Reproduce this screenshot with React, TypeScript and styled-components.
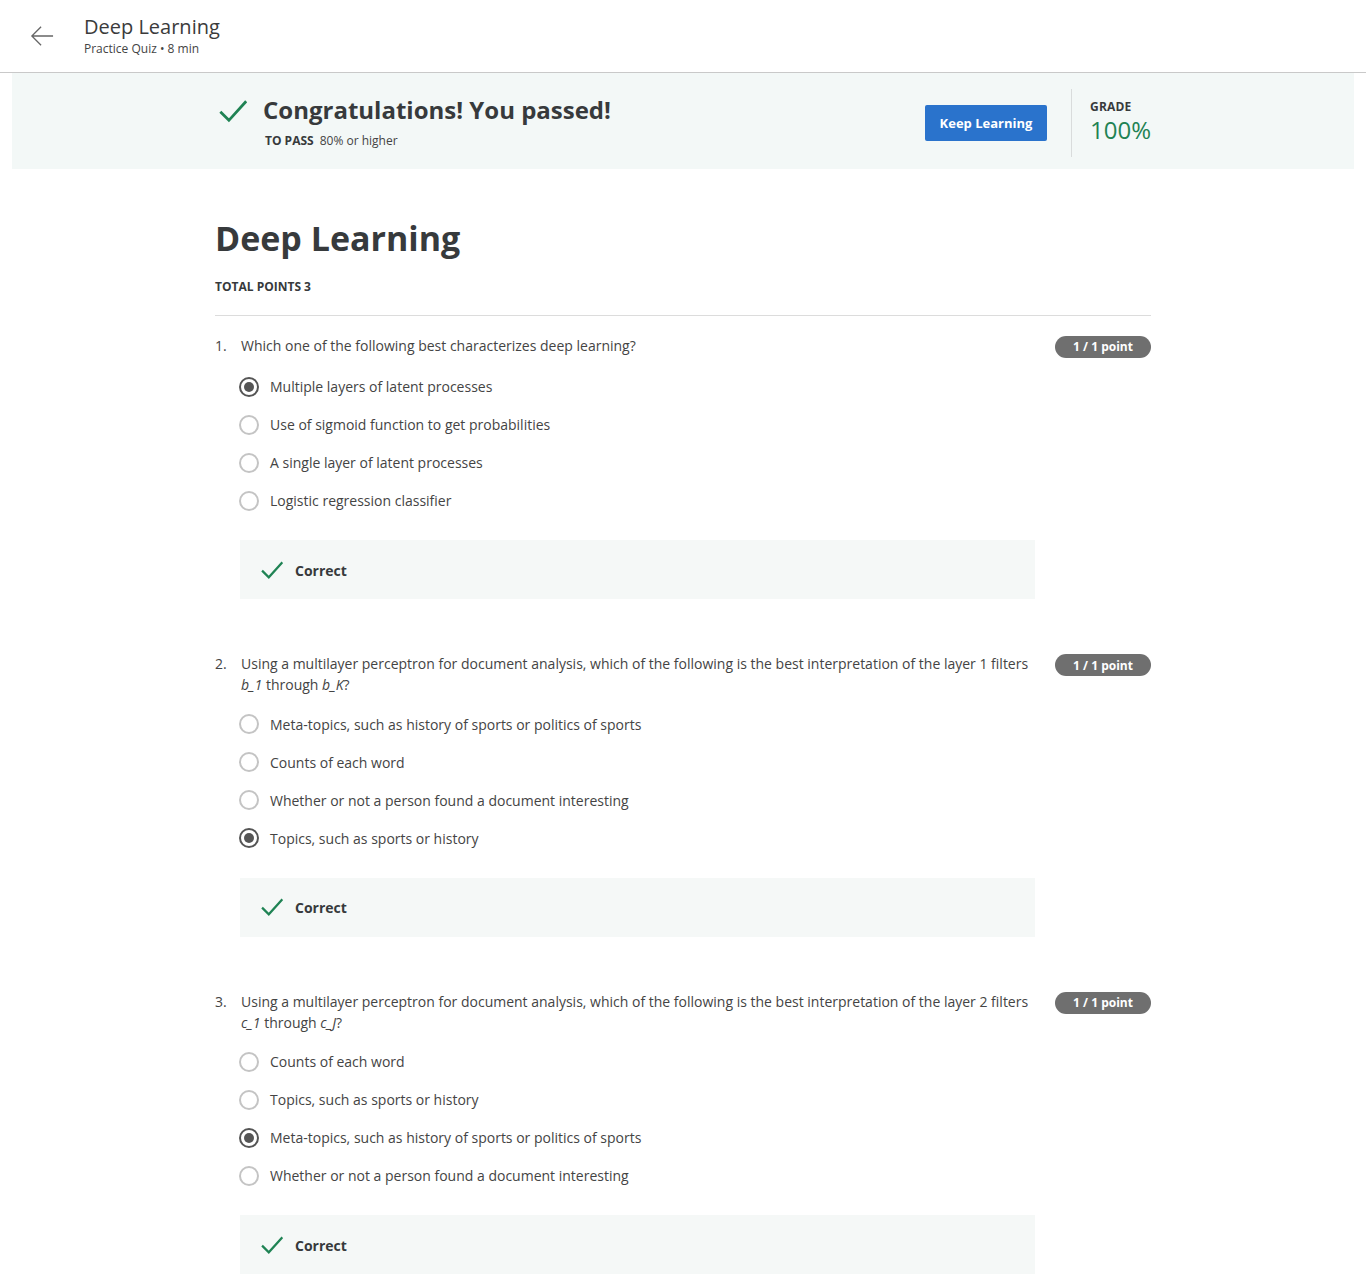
import React from "react";
import styled, { createGlobalStyle } from "styled-components";

const Global = createGlobalStyle`
  html, body { margin: 0; padding: 0; background: #fff; }
  body { font-family: "Open Sans", "Noto Sans", Arial, sans-serif; color: #373a3c; }
  * { box-sizing: border-box; }
`;

const Header = styled.header`
  height: 73px;
  border-bottom: 1px solid #c9c9c9;
  display: flex;
  align-items: center;
  padding-left: 30px;
  gap: 30px;
`;

const BackBtn = styled.div`
  width: 24px;
  height: 24px;
  display: flex;
  align-items: center;
  justify-content: center;
  margin-top: -1px;
`;

const HeaderText = styled.div`
  display: flex;
  flex-direction: column;
  margin-top: -2px;
`;

const HeaderTitle = styled.div`
  font-size: 20px;
  line-height: 26px;
  color: #3b3b3b;
`;

const HeaderSub = styled.div`
  margin-top: 1px;
  font-size: 12px;
  line-height: 16px;
  color: #444;
`;

const Banner = styled.section`
  margin: 0 12px;
  height: 96px;
  background: #f3f8f7;
  display: flex;
  justify-content: center;
`;

const BannerInner = styled.div`
  width: 936px;
  display: flex;
  align-items: center;
  justify-content: space-between;
`;

const PassGroup = styled.div`
  display: flex;
  align-items: flex-start;
  gap: 16px;
  padding-left: 4px;
  margin-top: 0px;
`;

const PassIcon = styled.div`
  width: 28px;
  height: 28px;
  margin-top: 3px;
`;

const PassText = styled.div`
  display: flex;
  flex-direction: column;
`;

const PassTitle = styled.h2`
  margin: 0;
  font-size: 24px;
  line-height: 32px;
  font-weight: 700;
  color: #373a3c;
`;

const PassMeta = styled.div`
  margin-top: 7px;
  font-size: 12px;
  line-height: 16px;
  color: #444;
  display: flex;
  gap: 6px;
  padding-left: 2px;
`;

const Strong = styled.span`
  font-weight: 700;
  color: #373a3c;
`;

const RightGroup = styled.div`
  display: flex;
  align-items: center;
  margin-top: 4px;
`;

const KeepButton = styled.button`
  width: 122px;
  height: 36px;
  border: none;
  border-radius: 2px;
  background: #2a73cc;
  color: #fff;
  font-family: inherit;
  font-size: 13px;
  font-weight: 700;
  cursor: pointer;
`;

const Divider = styled.div`
  width: 1px;
  height: 68px;
  background: #d9dcdc;
  margin: 0 18px 0 24px;
`;

const Grade = styled.div`
  display: flex;
  flex-direction: column;
  width: 61px;
  margin-top: -2px;
`;

const GradeLabel = styled.div`
  font-size: 12px;
  font-weight: 700;
  line-height: 16px;
  color: #373a3c;
  letter-spacing: 0.2px;
`;

const GradeValue = styled.div`
  font-size: 24px;
  line-height: 30px;
  color: #1f8354;
`;

const Main = styled.main`
  width: 936px;
  margin: 0 auto;
  padding-top: 46px;
  padding-bottom: 40px;
`;

const Title = styled.h1`
  margin: 0;
  font-size: 34px;
  line-height: 46px;
  font-weight: 700;
  color: #373a3c;
`;

const TotalPoints = styled.div`
  margin-top: 17px;
  font-size: 12px;
  line-height: 18px;
  font-weight: 700;
  color: #373a3c;
`;

const Rule = styled.hr`
  margin: 19px 0 0;
  border: none;
  border-top: 1px solid #dcdcdc;
`;

const Question = styled.section<{ $first?: boolean }>`
  margin-top: ${(p) => (p.$first ? "18.5px" : "54px")};
`;

const QRow = styled.div`
  display: flex;
  align-items: flex-start;
`;

const QNum = styled.div`
  width: 26px;
  font-size: 14px;
  line-height: 21px;
  color: #444;
`;

const QText = styled.div`
  flex: 1;
  font-size: 14px;
  line-height: 21px;
  color: #444;
  padding-right: 24px;
`;

const Badge = styled.div`
  width: 96px;
  height: 22px;
  margin-top: 1px;
  border-radius: 11px;
  background: #6f6f6f;
  color: #fff;
  font-size: 12px;
  font-weight: 700;
  display: flex;
  align-items: center;
  justify-content: center;
  flex-shrink: 0;
`;

const Options = styled.div`
  margin: 10px 0 0 24px;
  display: flex;
  flex-direction: column;
`;

const Option = styled.label`
  height: 38px;
  display: flex;
  align-items: center;
  gap: 11px;
  font-size: 14px;
  color: #444;
`;

const Radio = styled.span<{ $checked?: boolean }>`
  width: 20px;
  height: 20px;
  border-radius: 50%;
  border: 2px solid ${(p) => (p.$checked ? "#555" : "#c4c4c4")};
  display: flex;
  align-items: center;
  justify-content: center;
  flex-shrink: 0;
  &::after {
    content: "";
    width: 10px;
    height: 10px;
    border-radius: 50%;
    background: ${(p) => (p.$checked ? "#555" : "transparent")};
  }
`;

const Feedback = styled.div`
  margin: 20.5px 116px 0 25px;
  height: 59px;
  background: #f5f8f7;
  display: flex;
  align-items: center;
  gap: 12px;
  padding-left: 21px;
`;

const FeedbackText = styled.span`
  font-size: 14px;
  font-weight: 700;
  color: #373a3c;
  margin-top: 1px;
`;

const Check = ({ size }: { size: number }) => (
  <svg width={size} height={size} viewBox="0 0 24 24" fill="none">
    <path d="M2 13.5 L8.5 20 L22.5 4.5" stroke="#1f8354" strokeWidth={2.4} strokeLinecap="square" />
  </svg>
);

type Q = {
  text: React.ReactNode;
  options: string[];
  selected: number;
};

const questions: Q[] = [
  {
    text: "Which one of the following best characterizes deep learning?",
    options: [
      "Multiple layers of latent processes",
      "Use of sigmoid function to get probabilities",
      "A single layer of latent processes",
      "Logistic regression classifier",
    ],
    selected: 0,
  },
  {
    text: (
      <>
        Using a multilayer perceptron for document analysis, which of the following is the best interpretation of
        the layer 1 filters <i>b_1</i> through <i>b_K</i>?
      </>
    ),
    options: [
      "Meta-topics, such as history of sports or politics of sports",
      "Counts of each word",
      "Whether or not a person found a document interesting",
      "Topics, such as sports or history",
    ],
    selected: 3,
  },
  {
    text: (
      <>
        Using a multilayer perceptron for document analysis, which of the following is the best interpretation of
        the layer 2 filters <i>c_1</i> through <i>c_J</i>?
      </>
    ),
    options: [
      "Counts of each word",
      "Topics, such as sports or history",
      "Meta-topics, such as history of sports or politics of sports",
      "Whether or not a person found a document interesting",
    ],
    selected: 2,
  },
];

export default function App() {
  return (
    <>
      <Global />
      <Header>
        <BackBtn>
          <svg width="26" height="24" viewBox="0 0 26 24" fill="none">
            <path d="M25 12 H2 M12 2 L2 12 L12 22" stroke="#666" strokeWidth="1.4" />
          </svg>
        </BackBtn>
        <HeaderText>
          <HeaderTitle>Deep Learning</HeaderTitle>
          <HeaderSub>Practice Quiz • 8 min</HeaderSub>
        </HeaderText>
      </Header>
      <Banner>
        <BannerInner>
          <PassGroup>
            <PassIcon>
              <Check size={28} />
            </PassIcon>
            <PassText>
              <PassTitle>Congratulations! You passed!</PassTitle>
              <PassMeta>
                <Strong>TO PASS</Strong>
                <span>80% or higher</span>
              </PassMeta>
            </PassText>
          </PassGroup>
          <RightGroup>
            <KeepButton>Keep Learning</KeepButton>
            <Divider />
            <Grade>
              <GradeLabel>GRADE</GradeLabel>
              <GradeValue>100%</GradeValue>
            </Grade>
          </RightGroup>
        </BannerInner>
      </Banner>
      <Main>
        <Title>Deep Learning</Title>
        <TotalPoints>TOTAL POINTS 3</TotalPoints>
        <Rule />
        {questions.map((q, i) => (
          <Question key={i} $first={i === 0}>
            <QRow>
              <QNum>{i + 1}.</QNum>
              <QText>{q.text}</QText>
              <Badge>1 / 1 point</Badge>
            </QRow>
            <Options>
              {q.options.map((o, j) => (
                <Option key={j}>
                  <Radio $checked={j === q.selected} />
                  {o}
                </Option>
              ))}
            </Options>
            <Feedback>
              <Check size={22} />
              <FeedbackText>Correct</FeedbackText>
            </Feedback>
          </Question>
        ))}
      </Main>
    </>
  );
}
